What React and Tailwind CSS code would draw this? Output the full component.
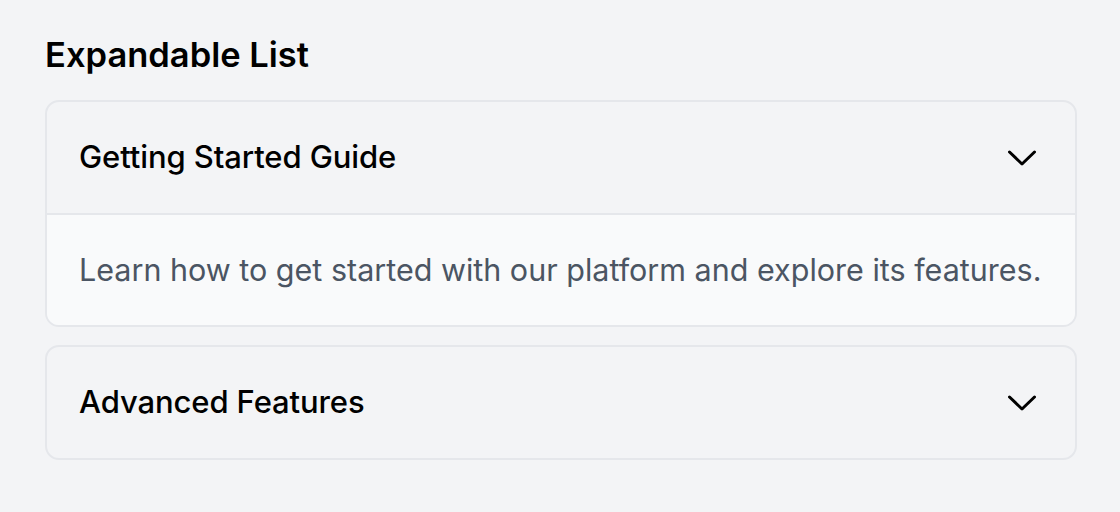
import React from "react";

function Chevron() {
  return (
    <svg width="30" height="18" viewBox="0 0 30 18" fill="none" className="shrink-0">
      <polyline points="2.5,3 15,15 27.5,3" stroke="#000" strokeWidth="3" strokeLinecap="round" strokeLinejoin="round" />
    </svg>
  );
}

function Item({ title, body }) {
  return (
    <div className="rounded-[14px] border-2 border-[#e5e7eb] overflow-hidden">
      <div className="h-[111px] flex items-center justify-between pl-[32px] pr-[38px]">
        <span className="text-[31px] font-medium text-black tracking-[-0.1px]">{title}</span>
        <Chevron />
      </div>
      {body && (
        <div className="border-t-2 border-[#e5e7eb] bg-[#f9fafb] h-[112px] flex items-center pl-[32px]">
          <span className="text-[30.5px] text-[#4b5563]">{body}</span>
        </div>
      )}
    </div>
  );
}

export default function App() {
  return (
    <div className="min-h-[512px] bg-[#f3f4f6] pl-[45px] pr-[43px] pt-[35px]" style={{ fontFamily: "Inter, 'Noto Sans', sans-serif" }}>
      <h2 className="text-[34.5px] font-semibold text-black leading-[40px] mb-[25px]">Expandable List</h2>
      <div className="flex flex-col gap-[18px]">
        <Item title="Getting Started Guide" body="Learn how to get started with our platform and explore its features." />
        <Item title="Advanced Features" />
      </div>
    </div>
  );
}
